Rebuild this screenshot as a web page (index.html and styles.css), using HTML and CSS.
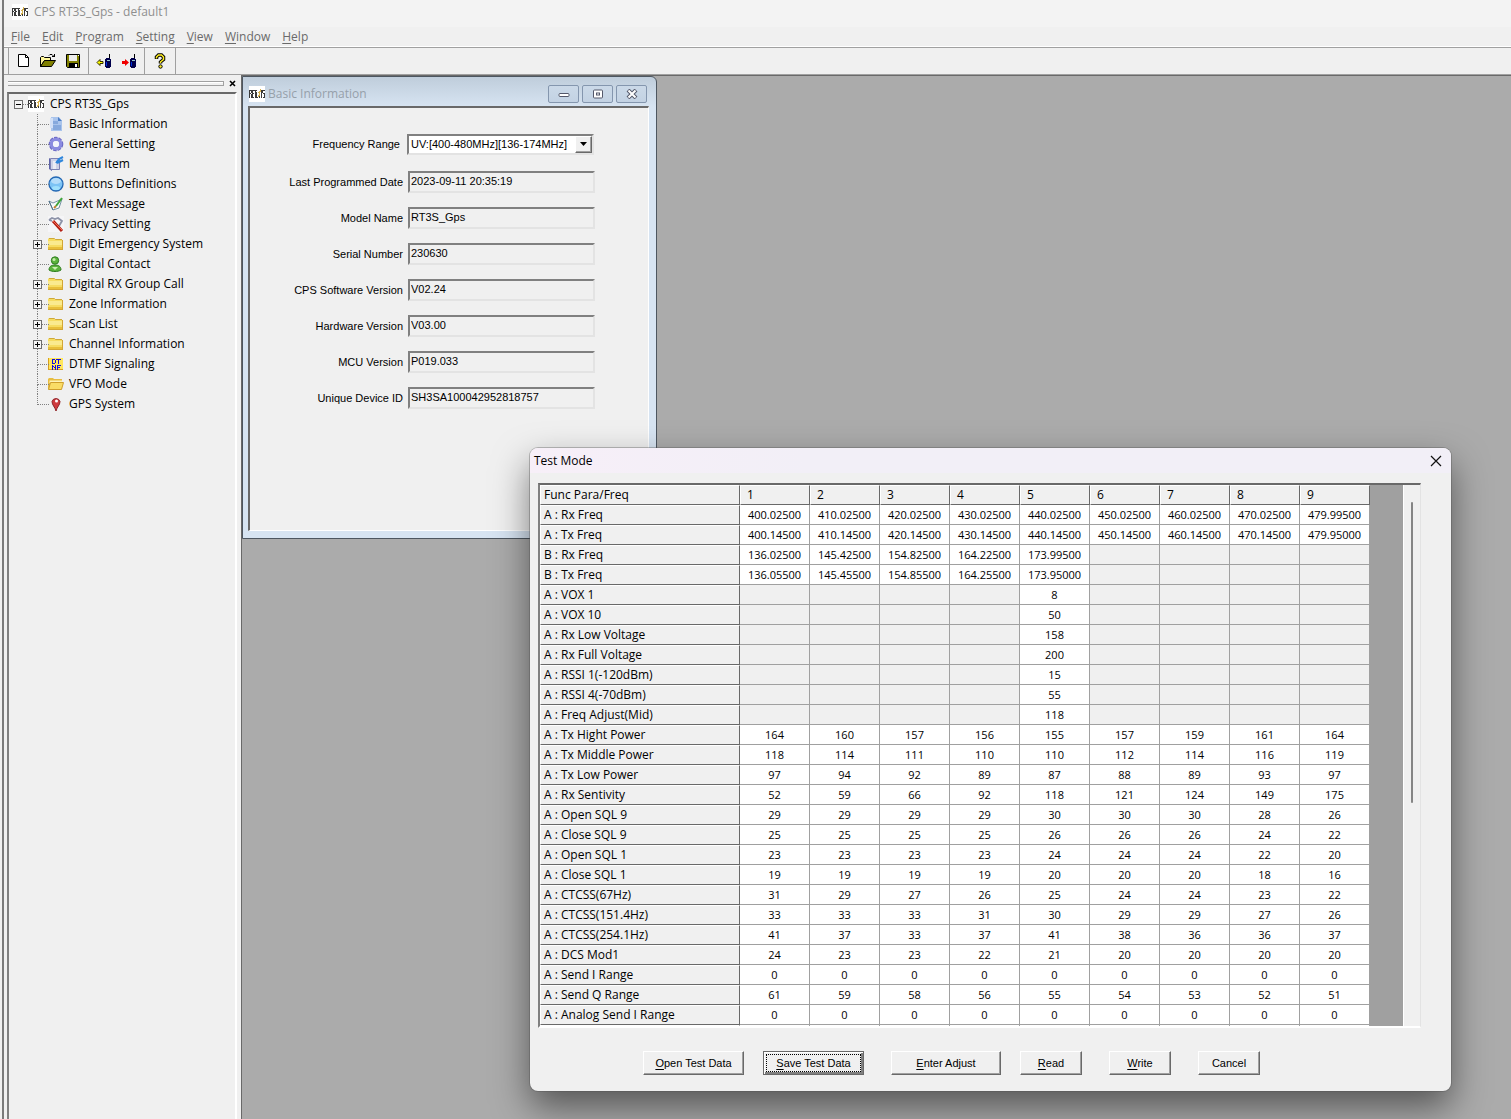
FILE: index.html
```html
<!DOCTYPE html>
<html lang="en">
<head>
<meta charset="utf-8">
<title>CPS RT3S_Gps - default1</title>
<link rel="stylesheet" href="styles.css">
</head>
<body>
<svg class="sprite" aria-hidden="true">
  <symbol id="logo" viewBox="0 0 16 16">
    <rect width="16" height="16" fill="#fff"/>
    <path d="M.5 4v8M2.500 4v3M1 4.500h1M0 7.500h2M2.500 8v4M3.500 4v8M3 4.500h2M3 7.500h2M3 11.500h2M5 4.500h3M6.500 4v8M7.500 6v6M7 11.500h2M10.500 10v2M12.500 4v8M13.500 4v3M14 4.500h2M14 7.500h2M15.500 8v4M14 11.500h2" stroke="#3a3a3a" fill="none"/>
    <path d="M9.500 6v1M9.500 9v2M10.500 5v5M11.500 3v3" stroke="#d9b24c" fill="none"/>
  </symbol>
  <symbol id="folder" viewBox="0 0 16 16">
    <path d="M0 14V3l1-1h4l1 1h8v11z" fill="#f6dc62"/>
    <path d="M1 2.500h5.500l1 1H14" stroke="#cfa93a" fill="none"/>
    <path d="M0 5h14v4H0z" fill="#faea8e"/>
    <path d="M0 11h14v3H0z" fill="#e8bf3a"/>
    <path d="M14.500 4v10M0 13.500h14" stroke="#d3a634" fill="none"/>
  </symbol>
  <symbol id="radio" viewBox="0 0 6 14">
    <path d="M4 0h1v4H4z" fill="#000"/>
    <path d="M1 4h4v1h1v8H5v1H1v-1H0V5h1z" fill="#00004c"/>
    <path d="M2 6h3v1H2z" fill="#9cc"/>
    <path d="M1 8h1v4H1z" fill="#0030e0"/>
  </symbol>
</svg>
<div class="app">
  <header class="titlebar">
    <svg class="icon"><use href="#logo"/></svg>
    <span>CPS RT3S_Gps - default1</span>
  </header>
  <nav class="menubar">
    <button><u>F</u>ile</button>
    <button><u>E</u>dit</button>
    <button><u>P</u>rogram</button>
    <button><u>S</u>etting</button>
    <button><u>V</u>iew</button>
    <button><u>W</u>indow</button>
    <button><u>H</u>elp</button>
  </nav>
  <div class="toolbar">
    <div class="tools">
      <button aria-label="New"><svg class="icon" viewBox="0 0 16 16"><path d="M3.500 1.500h7l3 3v9h-10z" fill="#fff" stroke="#000"/><path d="M10.500 1.500v3h3" fill="none" stroke="#000"/></svg></button>
      <button aria-label="Open"><svg class="icon" viewBox="0 0 16 16"><path d="M.5 13.500v-9l1-1h2l1 1h6v3h-6z" fill="#fff79a" stroke="#000"/><path d="M.5 13.500l4-6h11l-4 6z" fill="#808000" stroke="#000"/><path d="M9 2.500l1-1h2l2 2M14.500 1v3M12 3.500h2" fill="none" stroke="#000"/></svg></button>
      <button aria-label="Save"><svg class="icon" viewBox="0 0 16 16"><path d="M1.500 1.500h13v13h-12l-1-1z" fill="#808000" stroke="#000"/><path d="M4 2h8v6H4z" fill="#eee"/><path d="M4 10h9v5H4z" fill="#000"/><path d="M10 11h2v3h-2z" fill="#fff"/><path d="M13 2h1v1h-1z" fill="#fff"/></svg></button>
    </div>
    <div class="tools">
      <button aria-label="Read data"><svg class="icon" viewBox="0 0 16 16"><path d="M1 9.500l3-3v2h3v2H4v2z" fill="#ff0" stroke="#332f00"/><use href="#radio" x="9" y="1" width="6" height="14"/></svg></button>
      <button aria-label="Write data"><svg class="icon" viewBox="0 0 16 16"><path d="M8 9.500L4 6v2H1v3h3v2z" fill="#f00000"/><use href="#radio" x="9" y="1" width="6" height="14"/></svg></button>
    </div>
    <div class="tools">
      <button aria-label="About"><svg class="icon" viewBox="0 0 16 16"><path d="M4.500 6V4l2-2h3l2 2v2.500l-3 2.500v1.500" fill="none" stroke="#000" stroke-width="3.500"/><path d="M4.500 5.500V4l2-2h3l2 2v2.500l-3 2.500v1" fill="none" stroke="#ffee20" stroke-width="1.500"/><circle cx="8.500" cy="13.500" r="1.700" fill="#fe2" stroke="#000"/></svg></button>
    </div>
  </div>
  <main class="workspace">
    <aside class="panel">
      <div class="grip"><span class="grip-bar"></span><button class="grip-close" aria-label="Close panel"><svg viewBox="0 0 7 7"><path d="M1 1l5 5M6 1L1 6" stroke="#000" stroke-width="1.600"/></svg></button></div>
      <div class="tree">
        <div class="root"><button class="expander" aria-label="Collapse"><svg viewBox="0 0 9 9"><path d="M2 4.500h5" stroke="#000"/></svg></button><span class="dots"></span><svg class="icon"><use href="#logo"/></svg><a href="#">CPS RT3S_Gps</a></div>
        <ul>
          <li><svg class="icon" viewBox="0 0 16 16"><path d="M3 1h8l3 4v10H3z" fill="#a9c4ec"/><path d="M10 1v4h4z" fill="#4d7fc6"/><path d="M5 5h5v3H5zM5 9h8v5H5z" fill="#86a9dd"/><path d="M2 2h3v10H2z" fill="#d2e0f6"/></svg><a href="#">Basic Information</a></li>
          <li><svg class="icon" viewBox="0 0 16 16"><circle cx="8" cy="8" r="6.300" fill="none" stroke="#6a68c4" stroke-width="2" stroke-dasharray="3.500 1"/><circle cx="8" cy="8" r="4.700" fill="none" stroke="#8b8be0" stroke-width="3.200"/><circle cx="8" cy="8" r="3" fill="#f4f4fc"/></svg><a href="#">General Setting</a></li>
          <li><svg class="icon" viewBox="0 0 16 16"><path d="M1 2l3 2v11l-3-2z" fill="#5e63a8"/><path d="M2.500 2.500h9v11h-9z" fill="#cfd2e8" stroke="#7d82b4"/><path d="M5 5h3v8H5z" fill="#ecedf6"/><path d="M8 7l3-4 4-2M9 7l6-3" stroke="#2f86dc" stroke-width="2" fill="none"/></svg><a href="#">Menu Item</a></li>
          <li><svg class="icon" viewBox="0 0 16 16"><circle cx="8" cy="8" r="7" fill="#7cc3f5" stroke="#2468b4" stroke-width="1.300"/><ellipse cx="8" cy="5" rx="5" ry="3" fill="#b4dcfa"/><ellipse cx="8" cy="12" rx="4" ry="2" fill="#9fe0fd"/></svg><a href="#">Buttons Definitions</a></li>
          <li><svg class="icon" viewBox="0 0 16 16"><path d="M1 5l4 2 9-4-3 9-6 2z" fill="#f8fbfd" stroke="#7693a5"/><path d="M1 5l4 9" stroke="#4c6c82"/><path d="M8 10l6-8" stroke="#3fa53a" stroke-width="2"/><path d="M6 12l2-2" stroke="#c08030" stroke-width="2"/></svg><a href="#">Text Message</a></li>
          <li><svg class="icon" viewBox="0 0 16 16"><rect width="16" height="16" fill="#f5f5f7"/><path d="M1 4l3-2 3 1 3-1 4 3-3 5M1 4l3 1" fill="none" stroke="#8d93a8" stroke-width="1.800"/><path d="M5 5l9 10" stroke="#b32014" stroke-width="3"/><path d="M5 5l9 9" stroke="#f36a55"/></svg><a href="#">Privacy Setting</a></li>
          <li><button class="expander" aria-label="Expand"><svg viewBox="0 0 9 9"><path d="M2 4.500h5M4.500 2v5" stroke="#000"/></svg></button><svg class="icon"><use href="#folder"/></svg><a href="#">Digit Emergency System</a></li>
          <li><svg class="icon" viewBox="0 0 16 16"><path d="M1 14c0-4 3-5 6-5s6 1 6 5c-3 2-9 2-12 0z" fill="#5cb43c" stroke="#2f7d20"/><circle cx="7" cy="4.500" r="3.700" fill="#5cb43c" stroke="#2f7d20"/><path d="M4 11l3 3 3-3" fill="#c9edb0"/><circle cx="6" cy="3.500" r="1.500" fill="#c5ecab"/></svg><a href="#">Digital Contact</a></li>
          <li><button class="expander" aria-label="Expand"><svg viewBox="0 0 9 9"><path d="M2 4.500h5M4.500 2v5" stroke="#000"/></svg></button><svg class="icon"><use href="#folder"/></svg><a href="#">Digital RX Group Call</a></li>
          <li><button class="expander" aria-label="Expand"><svg viewBox="0 0 9 9"><path d="M2 4.500h5M4.500 2v5" stroke="#000"/></svg></button><svg class="icon"><use href="#folder"/></svg><a href="#">Zone Information</a></li>
          <li><button class="expander" aria-label="Expand"><svg viewBox="0 0 9 9"><path d="M2 4.500h5M4.500 2v5" stroke="#000"/></svg></button><svg class="icon"><use href="#folder"/></svg><a href="#">Scan List</a></li>
          <li><button class="expander" aria-label="Expand"><svg viewBox="0 0 9 9"><path d="M2 4.500h5M4.500 2v5" stroke="#000"/></svg></button><svg class="icon"><use href="#folder"/></svg><a href="#">Channel Information</a></li>
          <li><svg class="icon" viewBox="0 0 16 16"><path d="M0 2h15v12H0z" fill="#ffe65c"/><path d="M.5 2v12M0 13.500h15" stroke="#d8a020"/><path d="M4.500 3v5M4 3.500h3M7.500 4v3M4 7.500h3M8 3.500h5M10.500 3v5M4.500 9v5M7.500 9v5M5 10.500h1M6 11.500h1M9.500 9v5M9 9.500h4M9 11.500h3" stroke="#1010e0" fill="none"/></svg><a href="#">DTMF Signaling</a></li>
          <li><svg class="icon" viewBox="0 0 16 16"><path d="M0 13V3l1-1h4l1 1h8v10z" fill="#e7bd42"/><path d="M1.500 4.500H14V7H1.500z" fill="#fff3b4"/><path d="M.5 13.500l2-7h13l-2 7z" fill="#f9dc66" stroke="#cf9f2d"/></svg><a href="#">VFO Mode</a></li>
          <li><svg class="icon" viewBox="0 0 16 16"><path d="M8 15C7 11 4 9 4 5.500a4.200 4.200 0 0 1 8 0C12 9 9 11 8 15z" fill="#cf3a3e" stroke="#8f2428"/><circle cx="8.500" cy="5" r="1.500" fill="#fff"/></svg><a href="#">GPS System</a></li>
        </ul>
      </div>
    </aside>
    <section class="mdi">
      <section class="child">
        <header class="child-title">
          <svg class="icon"><use href="#logo"/></svg>
          <h2>Basic Information</h2>
          <button aria-label="Minimize"><svg viewBox="0 0 14 10"><rect x="2" y="4.500" width="10" height="3" rx="1" fill="#fff" stroke="#54586a"/></svg></button>
          <button aria-label="Maximize"><svg viewBox="0 0 14 10"><rect x="2.500" y="1" width="9" height="8" rx="1" fill="#fff" stroke="#54586a"/><rect x="5.500" y="4" width="3" height="2" fill="#fff" stroke="#54586a"/></svg></button>
          <button aria-label="Close"><svg viewBox="0 0 14 10"><path d="M3 1l8 8M11 1L3 9" stroke="#54586a" stroke-width="4"/><path d="M3.500 1.500l7 7M10.500 1.500l-7 7" stroke="#fff" stroke-width="2"/></svg></button>
        </header>
        <form class="child-body">
          <div class="field first"><label for="range">Frequency Range</label>
            <span class="combo"><select id="range"><option>UV:[400-480MHz][136-174MHz]</option></select><span class="combo-arrow"><svg viewBox="0 0 7 4"><path d="M0 0h7L3.500 4z"/></svg></span></span></div>
          <div class="field"><label for="date">Last Programmed Date</label><input id="date" readonly value="2023-09-11 20:35:19"></div>
          <div class="field"><label for="model">Model Name</label><input id="model" readonly value="RT3S_Gps"></div>
          <div class="field"><label for="serial">Serial Number</label><input id="serial" readonly value="230630"></div>
          <div class="field"><label for="cps">CPS Software Version</label><input id="cps" readonly value="V02.24"></div>
          <div class="field"><label for="hw">Hardware Version</label><input id="hw" readonly value="V03.00"></div>
          <div class="field"><label for="mcu">MCU Version</label><input id="mcu" readonly value="P019.033"></div>
          <div class="field"><label for="uid">Unique Device ID</label><input id="uid" readonly value="SH3SA100042952818757"></div>
        </form>
      </section>
      <section class="dialog" role="dialog" aria-labelledby="dialog-title">
        <header class="dialog-title">
          <h2 id="dialog-title">Test Mode</h2>
          <button aria-label="Close"><svg viewBox="0 0 12 12"><path d="M1 1l10 10M11 1L1 11" stroke="#111" stroke-width="1.200"/></svg></button>
        </header>
        <div class="grid">
          <div class="grid-view">
            <table>
              <thead><tr><th>Func Para/Freq</th><th>1</th><th>2</th><th>3</th><th>4</th><th>5</th><th>6</th><th>7</th><th>8</th><th>9</th></tr></thead>
              <tbody>
              <tr><th>A : Rx Freq</th><td>400.02500</td><td>410.02500</td><td>420.02500</td><td>430.02500</td><td>440.02500</td><td>450.02500</td><td>460.02500</td><td>470.02500</td><td>479.99500</td></tr>
              <tr><th>A : Tx Freq</th><td>400.14500</td><td>410.14500</td><td>420.14500</td><td>430.14500</td><td>440.14500</td><td>450.14500</td><td>460.14500</td><td>470.14500</td><td>479.95000</td></tr>
              <tr><th>B : Rx Freq</th><td>136.02500</td><td>145.42500</td><td>154.82500</td><td>164.22500</td><td>173.99500</td><td></td><td></td><td></td><td></td></tr>
              <tr><th>B : Tx Freq</th><td>136.05500</td><td>145.45500</td><td>154.85500</td><td>164.25500</td><td>173.95000</td><td></td><td></td><td></td><td></td></tr>
              <tr><th>A : VOX 1</th><td></td><td></td><td></td><td></td><td>8</td><td></td><td></td><td></td><td></td></tr>
              <tr><th>A : VOX 10</th><td></td><td></td><td></td><td></td><td>50</td><td></td><td></td><td></td><td></td></tr>
              <tr><th>A : Rx Low Voltage</th><td></td><td></td><td></td><td></td><td>158</td><td></td><td></td><td></td><td></td></tr>
              <tr><th>A : Rx Full Voltage</th><td></td><td></td><td></td><td></td><td>200</td><td></td><td></td><td></td><td></td></tr>
              <tr><th>A : RSSI 1(-120dBm)</th><td></td><td></td><td></td><td></td><td>15</td><td></td><td></td><td></td><td></td></tr>
              <tr><th>A : RSSI 4(-70dBm)</th><td></td><td></td><td></td><td></td><td>55</td><td></td><td></td><td></td><td></td></tr>
              <tr><th>A : Freq Adjust(Mid)</th><td></td><td></td><td></td><td></td><td>118</td><td></td><td></td><td></td><td></td></tr>
              <tr><th>A : Tx Hight Power</th><td>164</td><td>160</td><td>157</td><td>156</td><td>155</td><td>157</td><td>159</td><td>161</td><td>164</td></tr>
              <tr><th>A : Tx Middle Power</th><td>118</td><td>114</td><td>111</td><td>110</td><td>110</td><td>112</td><td>114</td><td>116</td><td>119</td></tr>
              <tr><th>A : Tx Low Power</th><td>97</td><td>94</td><td>92</td><td>89</td><td>87</td><td>88</td><td>89</td><td>93</td><td>97</td></tr>
              <tr><th>A : Rx Sentivity</th><td>52</td><td>59</td><td>66</td><td>92</td><td>118</td><td>121</td><td>124</td><td>149</td><td>175</td></tr>
              <tr><th>A : Open SQL 9</th><td>29</td><td>29</td><td>29</td><td>29</td><td>30</td><td>30</td><td>30</td><td>28</td><td>26</td></tr>
              <tr><th>A : Close SQL 9</th><td>25</td><td>25</td><td>25</td><td>25</td><td>26</td><td>26</td><td>26</td><td>24</td><td>22</td></tr>
              <tr><th>A : Open SQL 1</th><td>23</td><td>23</td><td>23</td><td>23</td><td>24</td><td>24</td><td>24</td><td>22</td><td>20</td></tr>
              <tr><th>A : Close SQL 1</th><td>19</td><td>19</td><td>19</td><td>19</td><td>20</td><td>20</td><td>20</td><td>18</td><td>16</td></tr>
              <tr><th>A : CTCSS(67Hz)</th><td>31</td><td>29</td><td>27</td><td>26</td><td>25</td><td>24</td><td>24</td><td>23</td><td>22</td></tr>
              <tr><th>A : CTCSS(151.4Hz)</th><td>33</td><td>33</td><td>33</td><td>31</td><td>30</td><td>29</td><td>29</td><td>27</td><td>26</td></tr>
              <tr><th>A : CTCSS(254.1Hz)</th><td>41</td><td>37</td><td>33</td><td>37</td><td>41</td><td>38</td><td>36</td><td>36</td><td>37</td></tr>
              <tr><th>A : DCS Mod1</th><td>24</td><td>23</td><td>23</td><td>22</td><td>21</td><td>20</td><td>20</td><td>20</td><td>20</td></tr>
              <tr><th>A : Send I Range</th><td>0</td><td>0</td><td>0</td><td>0</td><td>0</td><td>0</td><td>0</td><td>0</td><td>0</td></tr>
              <tr><th>A : Send Q Range</th><td>61</td><td>59</td><td>58</td><td>56</td><td>55</td><td>54</td><td>53</td><td>52</td><td>51</td></tr>
              <tr><th>A : Analog Send I Range</th><td>0</td><td>0</td><td>0</td><td>0</td><td>0</td><td>0</td><td>0</td><td>0</td><td>0</td></tr>
              <tr class="pending"><th></th><td></td><td></td><td></td><td></td><td></td><td></td><td></td><td></td><td></td></tr>
              </tbody>
            </table>
          </div>
          <div class="scrollbar"><span class="thumb"></span></div>
        </div>
        <footer class="actions">
          <button class="wide"><u>O</u>pen Test Data</button>
          <button class="wide default"><span><u>S</u>ave Test Data</span></button>
          <button class="wider spaced"><u>E</u>nter Adjust</button>
          <button><u>R</u>ead</button>
          <button class="spaced"><u>W</u>rite</button>
          <button class="spaced">Cancel</button>
        </footer>
      </section>
    </section>
  </main>
</div>
</body>
</html>
```
FILE: styles.css
```css
* { box-sizing: border-box; }
html, body { height: 100%; }
body {
  margin: 0;
  background: #f0f0f0;
  color: #000;
  font: 12px/20px "Open Sans", "Noto Sans", sans-serif;
  overflow: hidden;
}
button, input, select { font: inherit; color: inherit; border-radius: 0; }
button { padding: 0; border: 0; background: none; }
a { color: inherit; text-decoration: none; }
h2 { margin: 0; font: inherit; }
svg { display: block; }
.sprite { position: absolute; width: 0; height: 0; }
.icon { width: 16px; height: 16px; flex: none; }

.app {
  min-height: 100vh;
  margin-left: 2px;
  border-left: 2px solid #7a7a7a;
  display: flex;
  flex-direction: column;
}
.titlebar {
  display: flex;
  align-items: center;
  gap: 6px;
  height: 27px;
  padding: 0 8px 4px;
  background: #f3f3f3;
  color: #8f8f8f;
}
.menubar {
  display: flex;
  gap: 12px;
  height: 20px;
  padding: 0 7px;
  border-bottom: 1px solid #fff;
  color: #6a6a6a;
}
.menubar button { line-height: 18px; }
u { text-underline-offset: 2px; }

.toolbar {
  display: flex;
  height: 28px;
  padding-left: 4px;
  border-top: 1px solid #a0a0a0;
  border-bottom: 1px solid #a0a0a0;
}
.tools {
  display: flex;
  gap: 9px;
  align-items: center;
  padding: 0 7px;
  border-right: 1px solid #a0a0a0;
}
.tools:first-child { border-left: 1px solid #a0a0a0; padding-left: 6px; }

.workspace { flex: 1; display: flex; position: relative; }
.panel {
  width: 237px;
  padding: 5px 4px 0 3px;
  display: flex;
  flex-direction: column;
  flex: none;
}
.grip { display: flex; align-items: center; gap: 5px; height: 6px; margin-bottom: 6px; }
.grip-bar {
  flex: 1;
  height: 5px;
  margin-left: 1px;
  border: solid #a0a0a0;
  border-width: 1px 1px 1px 0;
  box-shadow: inset 0 1px #fff;
}
.grip-close { width: 7px; height: 7px; margin-right: 1px; }
.tree {
  flex: 1;
  padding: 0 0 0 5px;
  border: solid;
  border-width: 2px 2px 0;
  border-color: #696969 #fff #fff #808080;
}
.root { display: flex; align-items: center; height: 20px; }
.root a { margin-left: 6px; }
.dots { width: 5px; border-top: 1px dotted #808080; }
.expander {
  width: 9px;
  height: 9px;
  border: 1px solid #6d6d6d;
  background: #f4f4f4;
}
.expander svg { width: 9px; height: 9px; margin: -1px; }
.tree ul { margin: 0; padding: 0 0 0 23px; list-style: none; }
.tree li {
  position: relative;
  display: flex;
  align-items: center;
  gap: 5px;
  height: 20px;
  padding-left: 11px;
}
.tree li::before {
  content: "";
  position: absolute;
  left: 0;
  top: 0;
  width: 11px;
  height: 10px;
  border: dotted #808080;
  border-width: 0 0 1px 1px;
}
.tree li:not(:last-child)::after {
  content: "";
  position: absolute;
  left: 0;
  top: 10px;
  height: 10px;
  border-left: 1px dotted #808080;
}
.tree li .expander { position: absolute; left: -4px; top: 6px; z-index: 1; }

.mdi {
  flex: 1;
  position: relative;
  border: solid #696969;
  border-width: 1px 0 0 1px;
  background: #ababab;
}
.child {
  position: absolute;
  left: 0;
  top: 0;
  width: 415px;
  height: 463px;
  display: flex;
  flex-direction: column;
  padding: 0 7px 7px 5px;
  border: 1px solid #4d5660;
  border-radius: 0 6px 0 0;
  background: linear-gradient(#bfcddb, #d7e4f2 30px);
}
.child-title {
  display: flex;
  align-items: center;
  gap: 3px;
  height: 29px;
  padding: 5px 2px 0 1px;
  color: #96a0aa;
}
.child-title h2 { flex: 1; }
.child-title button {
  display: grid;
  place-items: center;
  width: 31px;
  height: 18px;
  border: 1px solid #8496ae;
  border-radius: 2px;
  background: linear-gradient(#cbd9e8, #c3d2e3);
}
.child-title svg:not(.icon) { width: 14px; height: 10px; }
.child-body {
  flex: 1;
  padding: 25px 53px 0 0;
  border: solid;
  border-width: 2px 1px 1px 2px;
  border-color: #696969 #fff #fff #696969;
  background: #f0f0f0;
  font: 11px/13px "Liberation Sans", Arial, sans-serif;
}
.field {
  display: flex;
  justify-content: flex-end;
  align-items: center;
  gap: 5px;
  height: 22px;
  margin-bottom: 14px;
}
.field.first { margin-bottom: 16px; padding-right: 1px; gap: 7px; }
.field input, .combo {
  width: 187px;
  height: 22px;
  border: 2px solid;
  border-color: #808080 #e3e3e3 #e3e3e3 #808080;
  background: #f0f0f0;
}
.field input { padding: 0 1px 2px; outline: 0; }
.combo { display: flex; height: 21px; background: #fff; }
.combo select {
  flex: 1;
  min-width: 0;
  padding: 0 2px;
  border: 0;
  background: #fff;
  appearance: none;
}
.combo-arrow {
  display: grid;
  place-items: center;
  width: 17px;
  border: 1px solid;
  border-color: #fff #696969 #696969 #fff;
  box-shadow: inset -1px -1px #a0a0a0;
  background: #f0f0f0;
}
.combo-arrow svg { width: 7px; height: 4px; }

.dialog {
  position: absolute;
  left: 288px;
  top: 372px;
  width: 921px;
  border-radius: 8px;
  background: #f0f0f0;
  box-shadow: 0 0 0 1px rgba(80, 80, 80, .35), 0 16px 36px rgba(0, 0, 0, .5);
}
.dialog-title {
  display: flex;
  justify-content: space-between;
  align-items: center;
  height: 25px;
  padding: 0 9px 0 4px;
  border-radius: 8px 8px 0 0;
  background: linear-gradient(90deg, #f7eff8, #f2eff7 30%);
}
.dialog-title svg { width: 12px; height: 12px; }
.grid {
  display: flex;
  height: 545px;
  margin: 10px 30px 0 8px;
  border: solid;
  border-width: 2px 1px 2px 2px;
  border-color: #696969 #e3e3e3 #fff #808080;
}
.grid-view { flex: 1; overflow: hidden; background: #a0a0a0; }
.scrollbar { width: 17px; padding: 17px 7px 0; border-left: 1px solid #fff; }
.thumb { display: block; width: 2px; height: 301px; border-radius: 1px; background: #858585; }
table { width: 830px; border-collapse: separate; border-spacing: 0; table-layout: fixed; }
th, td { height: 20px; padding: 0; line-height: 19px; white-space: nowrap; }
th {
  padding-left: 3px;
  border: 1px solid;
  border-color: #fff #696969 #696969 #fff;
  background: #f0f0f0;
  font-weight: normal;
  line-height: 18px;
  text-align: left;
}
th:first-child { width: 200px; }
thead th:not(:first-child) { padding-left: 6px; }
td {
  border: solid #a0a0a0;
  border-width: 0 1px 1px 0;
  background: #fff;
  font-size: 11px;
  text-align: center;
}
td:empty { background: #f0f0f0; }
.pending td:empty { background: #fff; }
.actions {
  display: flex;
  justify-content: center;
  gap: 19px;
  padding: 23px 78px 16px 0;
  font: 11px/13px "Liberation Sans", Arial, sans-serif;
}
.actions button {
  width: 62px;
  height: 24px;
  border: 1px solid;
  border-color: #fff #696969 #696969 #fff;
  box-shadow: inset -1px -1px #a0a0a0;
  background: #f0f0f0;
}
.actions .wide { width: 101px; }
.actions .wider { width: 110px; }
.actions .spaced { margin-left: 8px; }
.actions .default {
  padding: 2px;
  border-color: #696969;
  box-shadow: inset 1px 1px #fff, inset -2px -2px #808080;
}
.default span { display: block; line-height: 16px; border: 1px dotted #000; }
```
